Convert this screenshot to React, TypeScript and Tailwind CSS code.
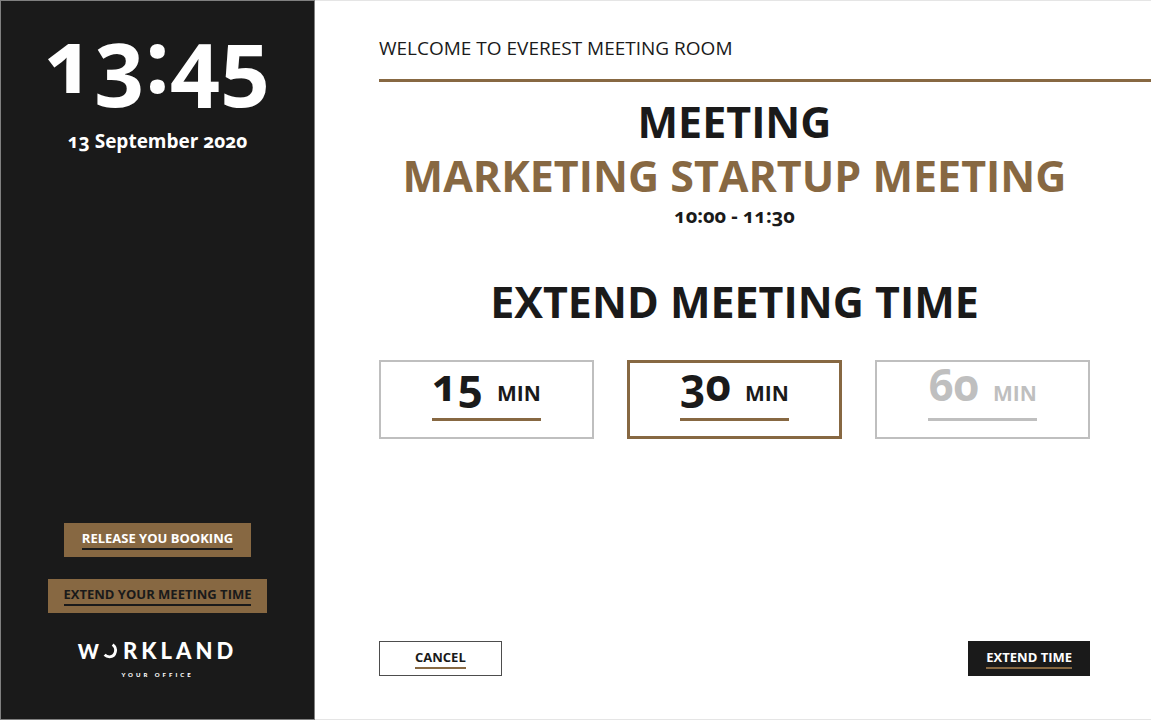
import { useState } from "react";
import clsx from "clsx";

const durations = [
  { minutes: 15, available: true },
  { minutes: 30, available: true },
  { minutes: 60, available: false },
];

function Logo() {
  return (
    <div className="flex flex-col items-center font-[Lato,sans-serif] font-black text-white">
      <div className="flex items-center text-[22px] leading-6">
        <span className="text-[20px]">W</span>
        <svg className="ml-1 h-4 w-4" viewBox="0 0 16 16" fill="none" stroke="currentColor" strokeWidth="2.8">
          <path d="M9.6 1.6C14.6 5 13 13.6 6.6 13.8C4.4 13.8 2.8 13 1.6 11.8" />
        </svg>
        <span className="pl-1 tracking-[4px]">RKLAND</span>
      </div>
      <div className="mt-2 text-[6px] leading-2 tracking-[3px]">YOUR OFFICE</div>
    </div>
  );
}

function Sidebar() {
  return (
    <aside className="flex w-[315px] shrink-0 flex-col items-center border border-[#808080] bg-[#1a1a1a] pb-10 text-white">
      <div className="mt-2 text-[87px] leading-[100px] font-bold">13:45</div>
      <div className="mt-5 text-[19px] leading-6 font-bold">13 September 2020</div>

      <div className="mt-auto flex flex-col items-center gap-[22px]">
        <button className="h-[34px] bg-[#876842] px-[18px] text-[13px] leading-4 font-bold">
          <span className="block border-b-2 border-[#1a1a1a] pb-0.5">RELEASE YOU BOOKING</span>
        </button>
        <button className="h-[34px] bg-[#876842] px-4 text-[13px] leading-4 font-bold text-[#1a1a1a]">
          <span className="block border-b-2 border-[#1a1a1a] pb-0.5">EXTEND YOUR MEETING TIME</span>
        </button>
      </div>
      <div className="mt-[26px]">
        <Logo />
      </div>
    </aside>
  );
}

export default function App() {
  const [selected, setSelected] = useState(30);

  return (
    <div className="flex min-h-screen bg-white font-['Open_Sans','Noto_Sans',sans-serif] text-[#1a1a1a] oldstyle-nums">
      <Sidebar />

      <main className="flex flex-1 flex-col border-y border-[#e5e5e5] pl-16">
        <header className="border-b-[3px] border-[#876842] pt-[35px] pb-[19px] text-[19px] leading-6">
          WELCOME TO EVEREST MEETING ROOM
        </header>

        <section className="mr-[61px] mt-[13px] text-center">
          <h1 className="text-[43px] leading-[54px] font-bold">
            MEETING
            <span className="block whitespace-nowrap text-[#876842]">MARKETING STARTUP MEETING</span>
          </h1>
          <p className="mt-px text-[20px] leading-6 font-bold">10:00 - 11:30</p>
        </section>

        <section className="mr-[61px] mt-11">
          <h2 className="text-center text-[43px] leading-[60px] font-bold">EXTEND MEETING TIME</h2>
          <div className="mt-7 grid grid-cols-3 gap-[33px]">
            {durations.map(({ minutes, available }) => (
              <button
                key={minutes}
                disabled={!available}
                aria-pressed={selected === minutes}
                onClick={() => setSelected(minutes)}
                className={clsx(
                  "flex h-[79px] items-start justify-center",
                  selected === minutes ? "border-[3px] border-[#876842]" : "border-2 border-[#bfbfbf] pt-px",
                  !available && "text-[#bfbfbf]",
                )}
              >
                <span
                  className={clsx(
                    "flex items-baseline gap-3.5 border-b-[3px] pb-3",
                    available ? "border-[#876842]" : "border-[#bfbfbf]",
                  )}
                >
                  <span className="text-[44px] leading-[43px] font-bold">{minutes}</span>
                  <span className="text-[21px] leading-6 font-bold">MIN</span>
                </span>
              </button>
            ))}
          </div>
        </section>

        <footer className="mr-[61px] mt-auto mb-[43px] flex justify-between">
          <button className="h-[35px] border border-[#4d4d4d] px-[35px] text-[13px] leading-4 font-bold">
            <span className="block border-b-2 border-[#876842] pb-0.5">CANCEL</span>
          </button>
          <button className="h-[35px] bg-[#1a1a1a] px-[18px] text-[13px] leading-4 font-bold text-white">
            <span className="block border-b-2 border-[#876842] pb-0.5">EXTEND TIME</span>
          </button>
        </footer>
      </main>
    </div>
  );
}
